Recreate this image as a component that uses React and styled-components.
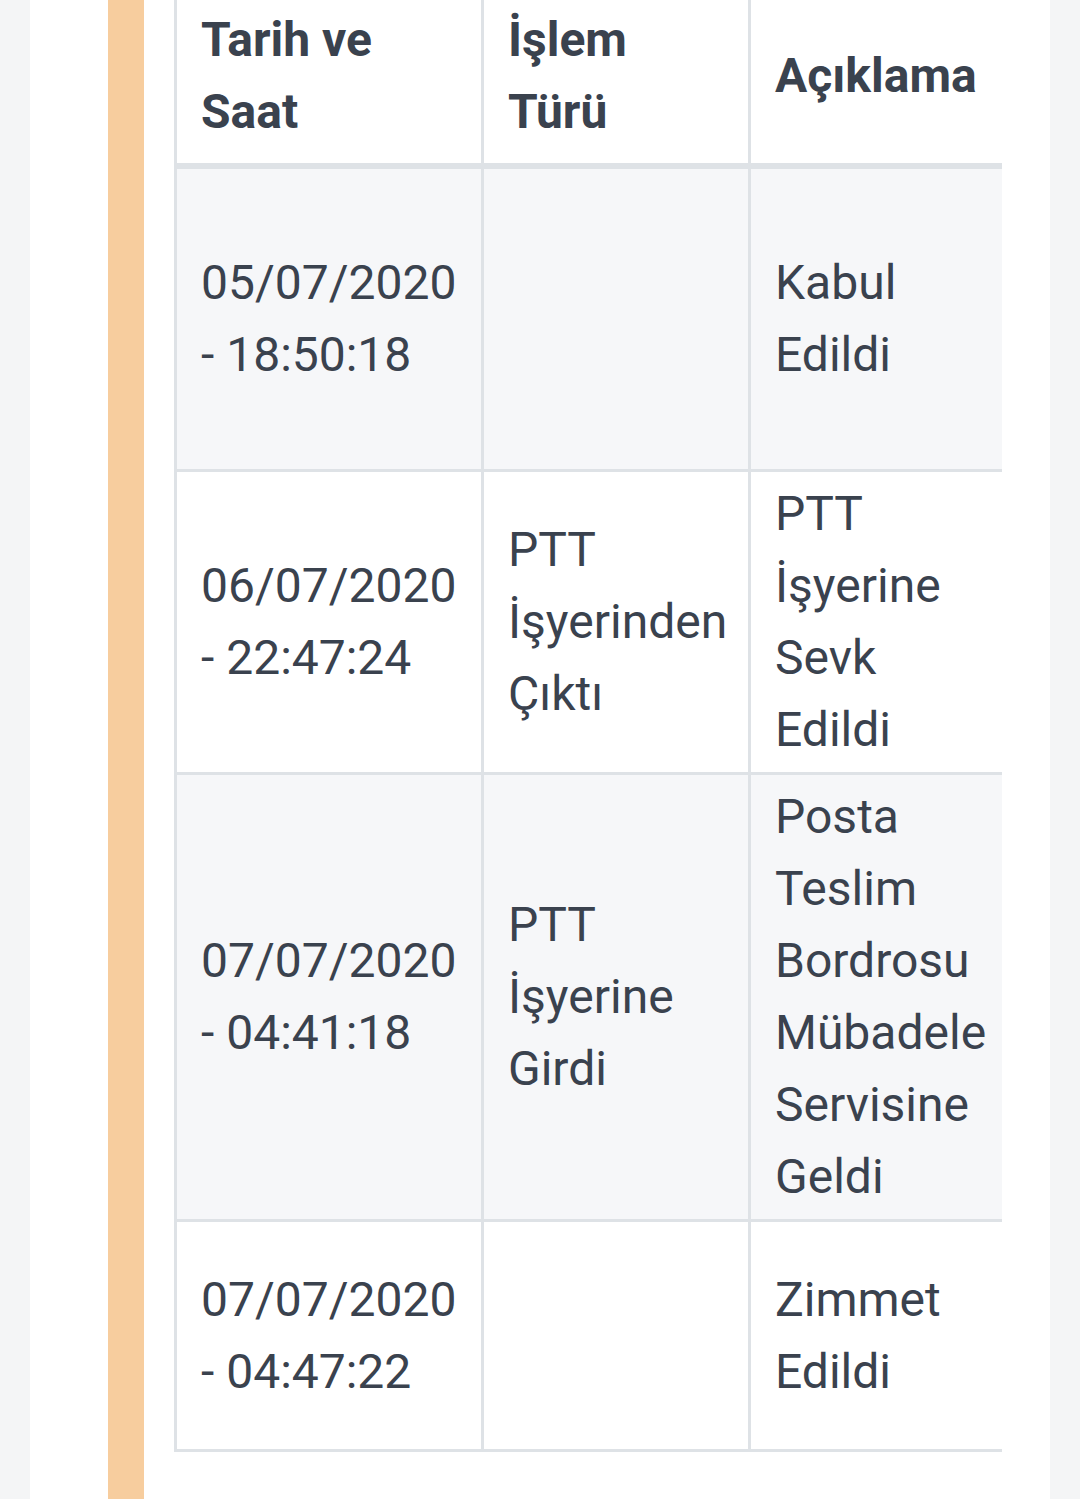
import React from 'react';
import styled, { createGlobalStyle } from 'styled-components';

const GlobalStyle = createGlobalStyle`
  html, body {
    margin: 0;
    padding: 0;
    background: #f4f5f6;
  }
  body {
    font-family: Roboto, "Noto Sans", "Liberation Sans", sans-serif;
    color: #3a424e;
  }
`;

const rows = [
  { date: '05/07/2020 - 18:50:18', type: '', desc: 'Kabul Edildi', height: 303 },
  { date: '06/07/2020 - 22:47:24', type: 'PTT İşyerinden Çıktı', desc: 'PTT İşyerine Sevk Edildi' },
  { date: '07/07/2020 - 04:41:18', type: 'PTT İşyerine Girdi', desc: 'Posta Teslim Bordrosu Mübadele Servisine Geldi' },
  { date: '07/07/2020 - 04:47:22', type: '', desc: 'Zimmet Edildi', height: 230 },
];

const App = () => {
  return (
    <ScPage>
      <GlobalStyle />
      <ScCard>
        <ScAccent />
        <ScScroll>
          <ScTable>
            <colgroup>
              <col style={{ width: 310 }} />
              <col style={{ width: 267 }} />
              <col style={{ width: 267 }} />
            </colgroup>
            <thead>
              <tr>
                <ScTh>Tarih ve Saat</ScTh>
                <ScTh>İşlem Türü</ScTh>
                <ScTh>Açıklama</ScTh>
              </tr>
            </thead>
            <tbody>
              {rows.map((row, i) => (
                <ScTr key={i} $striped={i % 2 === 0}>
                  <ScTd $height={row.height}>{row.date}</ScTd>
                  <ScTd $height={row.height}>{row.type}</ScTd>
                  <ScTd $height={row.height}>{row.desc}</ScTd>
                </ScTr>
              ))}
            </tbody>
          </ScTable>
        </ScScroll>
      </ScCard>
    </ScPage>
  );
};

const ScPage = styled.div`
  min-height: 1499px;
  padding: 0 30px;
  box-sizing: border-box;
  display: flex;
`;

const ScCard = styled.div`
  flex: 1;
  display: flex;
  align-items: stretch;
  background: #fff;
  padding: 0 48px 0 78px;
  overflow: hidden;
`;

const ScAccent = styled.div`
  width: 36px;
  flex-shrink: 0;
  background: #f7cd9e;
`;

const ScScroll = styled.div`
  flex: 1;
  margin-left: 30px;
  margin-top: -11px;
  overflow: hidden;
  align-self: flex-start;
`;

const ScTable = styled.table`
  width: 844px;
  table-layout: fixed;
  border-collapse: separate;
  border-spacing: 0;
  font-size: 48px;
  line-height: 72px;
`;

const ScTh = styled.th`
  text-align: left;
  vertical-align: middle;
  font-weight: 700;
  padding: 15px 24px;
  border-bottom: 6px solid #dee2e6;
  border-right: 3px solid #dee2e6;
  &:first-child {
    border-left: 3px solid #dee2e6;
  }
`;

const ScTr = styled.tr`
  background: ${(p) => (p.$striped ? '#f6f7f9' : '#fff')};
`;

const ScTd = styled.td`
  box-sizing: border-box;
  height: ${(p) => (p.$height ? `${p.$height}px` : 'auto')};
  vertical-align: middle;
  padding: 6px 24px;
  font-weight: 400;
  border-bottom: 3px solid #dee2e6;
  border-right: 3px solid #dee2e6;
  &:first-child {
    border-left: 3px solid #dee2e6;
  }
`;

export default App;
